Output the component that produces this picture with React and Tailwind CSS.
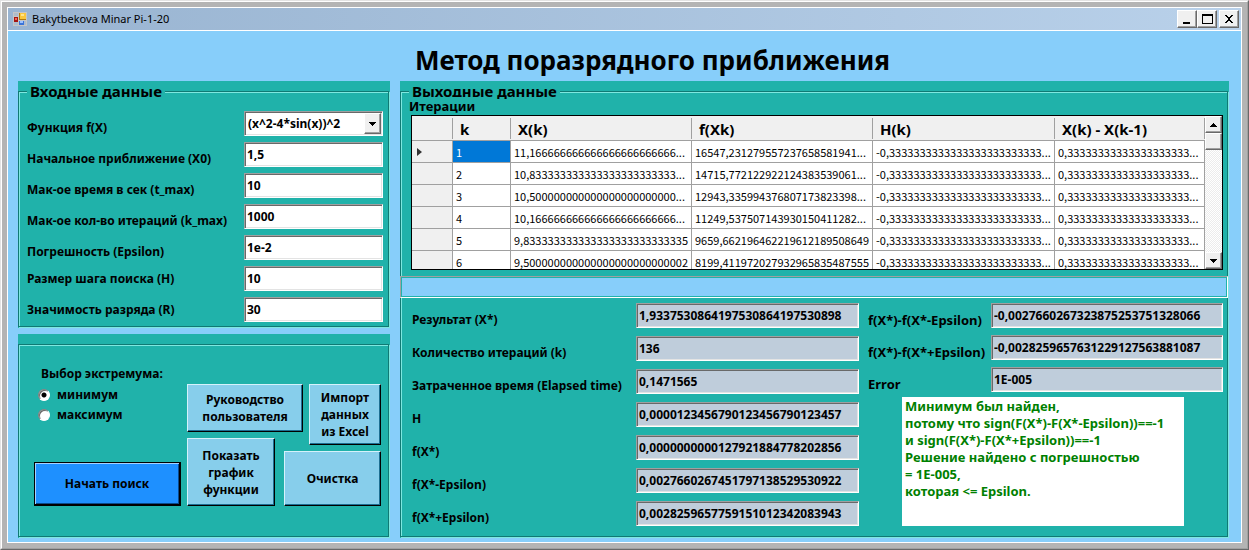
const rows = [
  ['1', '11,1' + '6'.repeat(23) + '...', '16547,231279557237658581941...'],
  ['2', '10,8' + '3'.repeat(23) + '...', '14715,772122922124383539061...'],
  ['3', '10,5' + '0'.repeat(23) + '...', '12943,335994376807173823398...'],
  ['4', '10,1' + '6'.repeat(23) + '...', '11249,537507143930150411282...'],
  ['5', '9,8' + '3'.repeat(25) + '5', '9659,662196462219612189508649'],
  ['6', '9,5' + '0'.repeat(25) + '2', '8199,411972027932965835487555'],
]
const stepH = '-0,' + '3'.repeat(25) + '...'
const stepX = '0,' + '3'.repeat(20) + '...'

const params = [
  ['x0', 'Начальное приближение (X0)', '1,5', 'pt-2'],
  ['tmax', 'Мак-ое время в сек (t_max)', '10', 'pt-2'],
  ['kmax', 'Мак-ое кол-во итераций (k_max)', '1000', 'pt-2'],
  ['eps', 'Погрешность (Epsilon)', '1e-2', 'pt-2'],
  ['h', 'Размер шага поиска (H)', '10', 'pt-0'],
  ['r', 'Значимость разряда (R)', '30', 'pt-0'],
]

const resultsLeft = [
  ['res', 'Результат (X*)', '1,9337530864197530864197530898'],
  ['iter', 'Количество итераций (k)', '136'],
  ['time', 'Затраченное время (Elapsed time)', '0,1471565'],
  ['hOut', 'H', '0,0000123456790123456790123457'],
  ['fx', 'f(X*)', '0,0000000000127921884778202856'],
  ['fxm', 'f(X*-Epsilon)', '0,0027660267451797138529530922'],
  ['fxp', 'f(X*+Epsilon)', '0,0028259657759151012342083943'],
]

const resultsRight = [
  ['dm', 'f(X*)-f(X*-Epsilon)', '-0,0027660267323875253751328066'],
  ['dp', 'f(X*)-f(X*+Epsilon)', '-0,0028259657631229127563881087'],
  ['err', 'Error', '1E-005'],
]

const sunken =
  'h-[25px] w-full min-w-0 border border-t-[#a0a0a0] border-l-[#a0a0a0] border-r-white border-b-white shadow-[inset_1px_1px_0_#696969,inset_-1px_-1px_0_#e3e3e3] outline-none text-[12px]'
const etched =
  'min-w-0 border border-[#107a74] shadow-[1px_1px_0_#7ee8e0,inset_1px_1px_0_#7ee8e0]'
const raised =
  'border border-t-white border-l-white border-r-[#696969] border-b-[#696969] bg-[#f0f0f0] shadow-[inset_-1px_-1px_0_#a0a0a0]'
const skyButton =
  'border border-t-[#d5f2fb] border-l-[#d5f2fb] border-r-black border-b-black bg-[#87ceeb] shadow-[inset_-1px_-1px_0_#1d6f92] leading-[17px]'

function Field({ id, label, value, labelClass, readOnly }) {
  return (
    <>
      <label htmlFor={id} className={'self-center whitespace-nowrap leading-4 ' + labelClass}>
        {label}
      </label>
      <input
        id={id}
        defaultValue={value}
        readOnly={readOnly}
        className={sunken + (readOnly ? ' bg-[#bfcddb]' : ' bg-white') + ' px-[2px]'}
      />
    </>
  )
}

function CaptionButton({ label, children }) {
  return (
    <button aria-label={label} className={raised + ' flex h-[18px] w-5 items-center justify-center'}>
      <svg width="12" height="12" viewBox="0 0 12 12" shapeRendering="crispEdges">{children}</svg>
    </button>
  )
}

function TitleBar() {
  return (
    <header className="flex h-[23px] items-center border-b border-white bg-linear-to-r from-[#99b4d1] to-[#b9d1ea] pr-[2px] pl-[5px]">
      <svg width="14" height="14" viewBox="0 0 14 14" shapeRendering="crispEdges">
        <rect width="14" height="14" fill="#c6c6c6" />
        <rect x="1" y="1" width="4" height="3" fill="#aebccb" />
        <rect x="1" y="10" width="4" height="3" fill="#aebccb" />
        <rect x="6" y="1" width="7" height="7" fill="#b07a10" />
        <rect x="7" y="1" width="6" height="6" fill="#fbc73c" />
        <rect x="8" y="2" width="3" height="2" fill="#ffe48c" />
        <rect x="1" y="5" width="4" height="5" fill="#a51410" />
        <rect x="2" y="6" width="2" height="2" fill="#ef6a55" />
        <rect x="6" y="9" width="5" height="4" fill="#3b74d8" />
        <rect x="7" y="9" width="3" height="2" fill="#9cc2ff" />
        <rect x="11" y="9" width="2" height="4" fill="#aebccb" />
      </svg>
      <span className="flex-1 pl-[5px] text-[11px] leading-4">Bakytbekova Minar Pi-1-20</span>
      <CaptionButton label="Свернуть"><rect x="2" y="9" width="7" height="2" /></CaptionButton>
      <CaptionButton label="Развернуть">
        <path d="M1 1h11v10h-11z M2 3v7h9v-7z" fillRule="evenodd" />
      </CaptionButton>
      <div className="w-[2px]" />
      <CaptionButton label="Закрыть">
        <path d="M2 2h2v1h1v1h2v-1h1v-1h2v1h-1v1h-1v1h-1v2h1v1h1v1h1v1h-2v-1h-1v-1h-2v1h-1v1h-2v-1h1v-1h1v-1h1v-2h-1v-1h-1v-1h-1z" />
      </CaptionButton>
    </header>
  )
}

function InputPanel() {
  return (
    <div className="bg-[#20b2aa] pr-px pb-px">
      <fieldset className={etched + ' pr-[5px] pb-1 pl-2'}>
        <legend className="bg-[#20b2aa] px-[3px] text-[15px] leading-[21px]">Входные данные</legend>
        <div className="grid grid-cols-[217px_minmax(0,1fr)] gap-y-[6px] pt-[9px]">
          <label htmlFor="fn" className="self-center pt-2 leading-4">Функция f(X)</label>
          <div className="relative">
            <select id="fn" className={sunken + ' appearance-none bg-white pl-[3px]'}>
              <option>(x^2-4*sin(x))^2</option>
            </select>
            <span className={raised + ' pointer-events-none absolute top-[2px] right-[2px] flex h-[21px] w-[17px] items-center justify-center'}>
              <svg width="7" height="4" viewBox="0 0 7 4" shapeRendering="crispEdges"><path d="M0 0h7v1h-1v1h-1v1h-1v1h-1v-1h-1v-1h-1v-1h-1z" /></svg>
            </span>
          </div>
          {params.map(([id, label, value, cls]) => (
            <Field key={id} id={id} label={label} value={value} labelClass={cls} />
          ))}
        </div>
      </fieldset>
    </div>
  )
}

function Radio({ label, checked }) {
  return (
    <label className="flex items-center gap-[7px] leading-5">
      <input
        type="radio"
        name="extremum"
        defaultChecked={checked}
        className="size-3 appearance-none rounded-full border border-t-[#808080] border-r-white border-b-white border-l-[#808080] bg-white shadow-[inset_1px_1px_0_#696969] checked:bg-[radial-gradient(circle,#000_2px,#fff_3px)]"
      />
      {label}
    </label>
  )
}

function ActionPanel() {
  return (
    <div className="flex flex-1 flex-col bg-[#20b2aa] pt-[10px] pr-px pb-px">
      <div className={etched + ' flex flex-1 items-start gap-[6px] pt-[39px] pr-[7px] pl-[15px]'}>
        <div className="flex h-[122px] flex-1 flex-col">
          <fieldset className="-mt-[21px] pl-1">
            <legend className="pl-[3px] leading-[22px]">Выбор экстремума:</legend>
            <Radio label="минимум" checked />
            <Radio label="максимум" />
          </fieldset>
          <button className="mt-auto h-11 border border-r-2 border-b-2 border-black bg-[#1e90ff] shadow-[inset_1px_1px_0_#a6d2ff,inset_-1px_-1px_0_#0a4a8c]">
            Начать поиск
          </button>
        </div>
        <div className="grid grid-cols-[88px_22px_72px] grid-rows-[48px_7px_55px] gap-[6px]">
          <button className={skyButton + ' col-span-2'}>Руководство пользователя</button>
          <button className={skyButton + ' row-span-2 px-2'}>Импорт данных из Excel</button>
          <button className={skyButton + ' row-span-2'}>Показать график функции</button>
          <button className={skyButton + ' col-span-2 col-start-2 row-start-3 ml-[3px]'}>Очистка</button>
        </div>
      </div>
    </div>
  )
}

function ScrollBar() {
  return (
    <div className="flex w-[17px] flex-col bg-[repeating-conic-gradient(#fff_0_25%,#ececec_0_50%)] bg-size-[2px_2px]">
      <button aria-label="Вверх" className={raised + ' flex h-[17px] items-center justify-center'}>
        <svg width="7" height="4" viewBox="0 0 7 4" shapeRendering="crispEdges"><path d="M3 0h1v1h1v1h1v1h1v1h-7v-1h1v-1h1v-1h1z" /></svg>
      </button>
      <div className={raised + ' h-[17px]'} />
      <button aria-label="Вниз" className={raised + ' mt-auto flex h-[17px] items-center justify-center'}>
        <svg width="7" height="4" viewBox="0 0 7 4" shapeRendering="crispEdges"><path d="M0 0h7v1h-1v1h-1v1h-1v1h-1v-1h-1v-1h-1v-1h-1z" /></svg>
      </button>
    </div>
  )
}

function IterationsTable() {
  const cell = 'overflow-hidden border-r border-b border-[#a0a0a0] bg-white pl-[3px] whitespace-nowrap'
  const head = 'border-b border-[#a0a0a0] bg-[#f0f0f0] p-0 text-left'
  const headText = 'mt-[2px] mb-px block h-[21px] border-r border-[#a0a0a0] pl-[7px] leading-[23px]'
  return (
    <div className="flex h-[155px] border border-black bg-white">
      <div className="min-w-0 flex-1 overflow-hidden">
        <table className="w-full table-fixed border-separate border-spacing-0">
          <colgroup>
            <col className="w-[41px]" />
            <col className="w-[58px]" />
            <col className="w-[181px]" />
            <col className="w-[181px]" />
            <col className="w-[182px]" />
            <col />
          </colgroup>
          <thead className="text-[15px]">
            <tr>
              <th className={head}><span className={headText} /></th>
              {['k', 'X(k)', 'f(Xk)', 'H(k)', 'X(k) - X(k-1)'].map((t) => (
                <th key={t} className={head}><span className={headText}>{t}</span></th>
              ))}
            </tr>
          </thead>
          <tbody className="font-['Noto_Sans_CJK_SC',sans-serif] text-[11px] font-normal">
            {rows.map(([k, x, f], i) => (
              <tr key={k} className="h-[22px] leading-4">
                <td className="border-r border-b border-[#a0a0a0] bg-[#f0f0f0] pl-[5px]">
                  {i === 0 && (
                    <svg width="5" height="8" viewBox="0 0 5 8"><path d="M0 0l5 4-5 4z" fill="#333" /></svg>
                  )}
                </td>
                <td className={i === 0 ? 'border-r border-b border-[#a0a0a0] bg-[#0078d7] pl-[3px] text-white' : cell}>{k}</td>
                <td className={cell}>{x}</td>
                <td className={cell}>{f}</td>
                <td className={cell}>{stepH}</td>
                <td className={cell}>{stepX}</td>
              </tr>
            ))}
          </tbody>
        </table>
      </div>
      <ScrollBar />
    </div>
  )
}

function OutputPanel() {
  return (
    <div className="flex min-w-0 flex-1 flex-col bg-[#20b2aa] pr-px pb-px">
      <fieldset className={etched + ' flex-1'}>
        <legend className="ml-2 bg-[#20b2aa] px-[3px] text-[15px] leading-[21px]">Выходные данные</legend>
        <h2 className="relative -mt-[5px] ml-2 w-fit bg-[#20b2aa] text-[13px] leading-[18px]">Итерации</h2>
        <div className="pr-1 pl-[10px]">
          <IterationsTable />
        </div>
        <div className="-mx-px mt-[6px] h-[22px] border border-t-[#a0a0a0] border-r-white border-b-white border-l-[#a0a0a0] bg-[#87cefa] shadow-[inset_0_0_0_1px_#20b2aa]" />
        <div className="flex items-start gap-[9px] pt-[5px] pr-1 pb-[10px] pl-[11px]">
          <div className="grid flex-1 grid-cols-[224px_minmax(0,1fr)] gap-y-2">
            {resultsLeft.map(([id, label, value]) => (
              <Field key={id} id={id} label={label} value={value} labelClass="pt-[9px]" readOnly />
            ))}
          </div>
          <div className="w-[355px] text-[13px]">
            <div className="grid grid-cols-[123px_minmax(0,1fr)] gap-y-[7px]">
              {resultsRight.map(([id, label, value]) => (
                <Field key={id} id={id} label={label} value={value} labelClass="pt-[9px]" readOnly />
              ))}
            </div>
            <output className="mt-[5px] mr-[39px] ml-[34px] block h-[129px] bg-white px-[3px] pt-px leading-[17px] text-[#008000]">
              Минимум был найден,<br />
              потому что sign(F(X*)-F(X*-Epsilon))==-1<br />
              и sign(F(X*)-F(X*+Epsilon))==-1<br />
              Решение найдено с погрешностью<br />
              = 1E-005,<br />
              которая &lt;= Epsilon.
            </output>
          </div>
        </div>
      </fieldset>
    </div>
  )
}

export default function App() {
  return (
    <div className="flex min-h-screen flex-col border border-t-[#e3e3e3] border-r-[#696969] border-b-[#696969] border-l-[#e3e3e3] bg-[#b4b4b4] font-['Noto_Sans','Open_Sans',sans-serif] text-[12px] text-black">
      <div className="flex flex-1 flex-col border border-t-white border-r-[#a0a0a0] border-b-[#a0a0a0] border-l-white p-[5px]">
        <div className="flex flex-1 flex-col border border-white bg-[#87cefa]">
          <TitleBar />
          <main className="flex flex-1 flex-col pr-3 pb-1 pl-[10px] font-bold">
            <h1 className="pt-3 pb-1 pl-[397px] text-[26px] leading-[34px]">Метод поразрядного приближения</h1>
            <div className="flex flex-1 gap-[10px]">
              <div className="flex w-[372px] flex-col gap-[6px]">
                <InputPanel />
                <ActionPanel />
              </div>
              <OutputPanel />
            </div>
          </main>
        </div>
      </div>
    </div>
  )
}
